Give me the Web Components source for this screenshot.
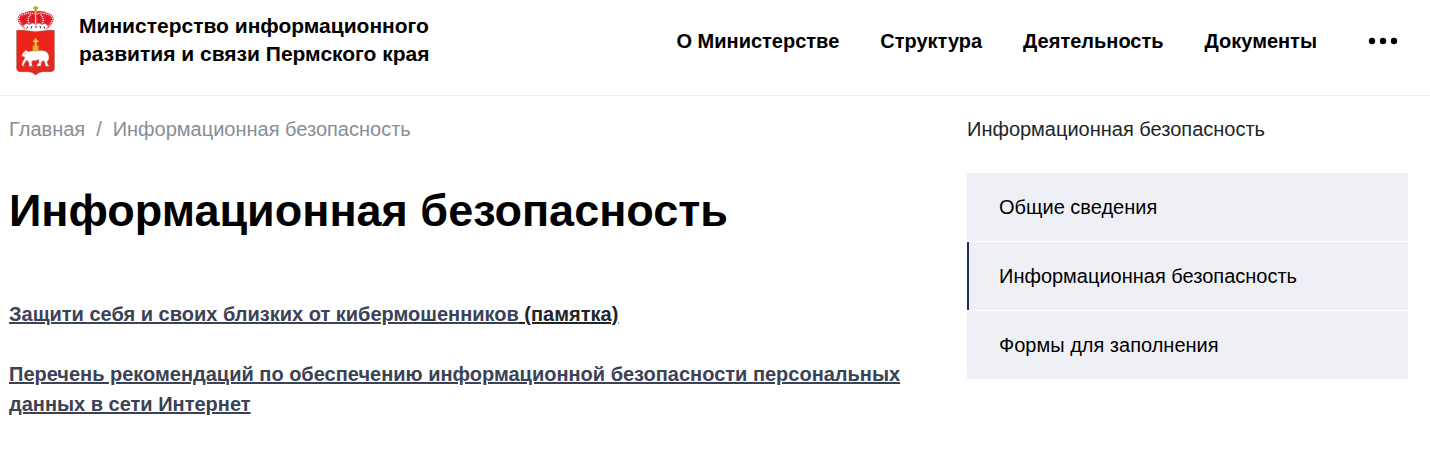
<!DOCTYPE html>
<html lang="ru">
<head>
<meta charset="utf-8">
<meta name="viewport" content="width=device-width, initial-scale=1">
<title>Информационная безопасность</title>
<style>
  body { margin: 0; background: #fff; color: #212529; font: 20px/30px "Liberation Sans", Arial, sans-serif; }
</style>
</head>
<body>
<site-header>
  <span slot="name">Министерство информационного<br>развития и связи Пермского края</span>
  <nav-link>О Министерстве</nav-link>
  <nav-link>Структура</nav-link>
  <nav-link>Деятельность</nav-link>
  <nav-link>Документы</nav-link>
</site-header>
<page-layout>
  <bread-crumbs slot="main" parent="Главная">Информационная безопасность</bread-crumbs>
  <page-title slot="main">Информационная безопасность</page-title>
  <doc-link slot="main">Защити себя и своих близких от кибермошенников<span slot="note"> (памятка)</span></doc-link>
  <doc-link slot="main">Перечень рекомендаций по обеспечению информационной безопасности персональных данных в сети Интернет</doc-link>
  <side-menu slot="side">
    <span slot="title">Информационная безопасность</span>
    <side-item>Общие сведения</side-item>
    <side-item active>Информационная безопасность</side-item>
    <side-item>Формы для заполнения</side-item>
  </side-menu>
</page-layout>
<script>
const define = (name, html) => {
  const template = document.createElement('template');
  template.innerHTML = html;
  customElements.define(name, class extends HTMLElement {
    constructor() {
      super();
      this.attachShadow({ mode: 'open' }).append(template.content.cloneNode(true));
    }
    connectedCallback() {
      const parent = this.shadowRoot.querySelector('[data-parent]');
      if (parent) parent.textContent = this.getAttribute('parent');
      if (this.hasAttribute('active')) this.shadowRoot.querySelector('a').setAttribute('aria-current', 'page');
    }
  });
};

define('perm-emblem', `
<style>:host { display: block; flex: none; width: 42px; height: 72px; } svg { display: block; width: 100%; height: 100%; }</style>
<svg viewBox="42 12 126 216" role="img" aria-label="Герб Пермского края">
  <path d="M50 91H163V205Q163 214 154 215H128Q117 215 107 225Q97 215 86 215H59Q50 214 50 205Z" fill="#ed241c" stroke="#8d4c3d" stroke-width="1.5"/>
  <path d="M73 86Q53 71 53 57Q55 39 74 38Q86 30 107 34Q128 30 141 38Q159 41 161 57Q160 72 142 86Z" fill="#e8202b"/>
  <path d="M73 82Q57 69 56 56Q60 42 77 42Q88 36 104 42M141 82Q157 69 158 56Q154 42 137 42Q126 36 110 42" fill="none" stroke="#fff" stroke-width="3.5" stroke-dasharray="3.5 2.5"/>
  <path d="M92 44Q78 58 89 72M122 44Q136 58 125 72M107 40V72" fill="none" stroke="#fff" stroke-width="3.5" stroke-dasharray="4 2"/>
  <path d="M99 46Q92 58 99 68M115 46Q122 58 115 68M72 50Q66 60 77 70M142 50Q148 60 137 70" fill="none" stroke="#a91522" stroke-width="2"/>
  <path d="M71 77Q79 67 88 75Q97 66 107 74Q117 66 126 75Q135 67 143 77L139 90Q107 98 76 90Z" fill="#fff" stroke="#c9b9bb" stroke-width="1.5"/>
  <path d="M83 80L80 86M96 78L93 85M108 77V84M120 78L122 85M132 80L135 86" stroke="#26262a" stroke-width="3"/>
  <circle cx="107" cy="35" r="5" fill="#d89b25"/>
  <path d="M107 17V33M99 24H115" stroke="#c58c22" stroke-width="5"/>
  <path d="M105 18L104 25" stroke="#f4d36b" stroke-width="2"/>
  <path d="M98 136H116V155H98Z" fill="#e0a81c" stroke="#a97518" stroke-width="1.5"/>
  <path d="M102 139V154M109 139V154" stroke="#f2cd4d" stroke-width="2"/>
  <path d="M107 115V138M99 124H115" stroke="#f2b22a" stroke-width="6"/>
  <path d="M107 117V136M101 124H113" stroke="#f8eea0" stroke-width="2"/>
  <path d="M67 163Q68 157 74 155L76 151L81 152L85 155Q95 151 108 154Q121 149 134 153Q147 158 147 174Q146 181 141 185L144 194L148 197V200H137L134 186L129 181L124 188L122 199H110L112 193L117 188L116 178Q107 184 100 181L95 185L96 195L100 200H88L86 186L79 180L76 187L71 193L74 199H69L65 194L69 184L74 175L74 170L65 169Z" fill="#fff" stroke="#bb7a72" stroke-width="1"/>
  <path d="M71 195L73 200M89 199H99M113 199H121M137 199H148" stroke="#454044" stroke-width="2"/>
  <circle cx="75" cy="161" r="1.5" fill="#5b4448"/>
</svg>`);

define('site-header', `
<style>
  :host { display: block; border-bottom: 1px solid #eee; color: #000; font-weight: 700; }
  header { display: flex; align-items: flex-start; justify-content: space-between; padding: 4px 22px 19px 14px; }
  .brand { display: flex; gap: 23px; color: inherit; text-decoration: none; }
  .name { padding-top: 8px; line-height: 28px; font-size: 21px; white-space: nowrap; }
  nav { display: flex; align-items: center; gap: 41px; padding-top: 22px; }
  button { display: flex; align-items: center; width: 50px; height: 30px; justify-content: center; padding: 0; border: 0; background: none; }
</style>
<header>
  <a class="brand" href="#"><perm-emblem></perm-emblem><span class="name"><slot name="name"></slot></span></a>
  <nav aria-label="Основное меню"><slot></slot>
    <button type="button" aria-label="Ещё"><svg width="30" height="8" viewBox="0 0 30 8" aria-hidden="true"><circle cx="4" cy="4" r="3.2"/><circle cx="15" cy="4" r="3.2"/><circle cx="26" cy="4" r="3.2"/></svg></button>
  </nav>
</header>`);

define('nav-link', `
<style>:host { display: block; } a { color: inherit; text-decoration: none; white-space: nowrap; }</style>
<a href="#"><slot></slot></a>`);

define('page-layout', `
<style>
  :host { display: grid; grid-template-columns: minmax(0, 928fr) minmax(0, 441fr); gap: 30px; padding: 18px 22px 18px 9px; }
</style>
<main><slot name="main"></slot></main>
<aside><slot name="side"></slot></aside>`);

define('bread-crumbs', `
<style>
  :host { display: block; color: #868e96; }
  nav { display: flex; gap: 11px; }
  a { color: inherit; text-decoration: none; }
</style>
<nav aria-label="Навигационная цепочка"><a href="#" data-parent></a><span aria-hidden="true">/</span><span aria-current="page"><slot></slot></span></nav>`);

define('page-title', `
<style>:host { display: block; color: #000; } h1 { margin: 39px 0 61px; font-size: 45px; line-height: 55px; }</style>
<h1><slot></slot></h1>`);

define('doc-link', `
<style>
  :host { display: block; margin-bottom: 30px; font-weight: 700; }
  a { color: #3b4256; text-decoration: underline 2px; }
  .note { color: #212529; text-decoration: underline 2px; white-space: pre-wrap; }
</style>
<a href="#"><slot></slot><span class="note"><slot name="note"></slot></span></a>`);

define('side-menu', `
<style>
  :host { display: block; }
  .title { margin-bottom: 29px; }
  nav { display: grid; gap: 1px; }
</style>
<div class="title"><slot name="title"></slot></div>
<nav aria-label="Меню раздела"><slot></slot></nav>`);

define('side-item', `
<style>
  :host { display: block; background: #eff0f6; color: #000; }
  a { display: block; padding: 19px 30px; border-left: 2px solid transparent; color: inherit; text-decoration: none; }
  :host([active]) a { border-color: #212f60; }
</style>
<a href="#"><slot></slot></a>`);
</script>
</body>
</html>
